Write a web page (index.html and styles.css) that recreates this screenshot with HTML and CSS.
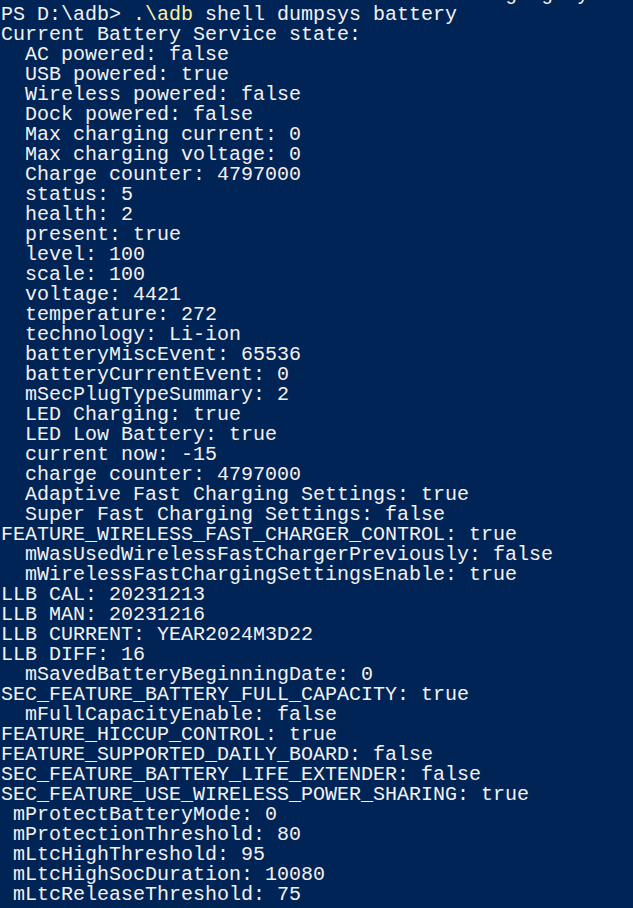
FILE: index.html
```html
<!DOCTYPE html>
<html>
<head>
<meta charset="utf-8">
<link rel="stylesheet" href="styles.css">
</head>
<body>
<pre class="console"><span class="cut">                                      charging by</span>
PS D:\adb&gt; <span class="cmd">.\adb</span> shell dumpsys battery
Current Battery Service state:
  AC powered: false
  USB powered: true
  Wireless powered: false
  Dock powered: false
  Max charging current: 0
  Max charging voltage: 0
  Charge counter: 4797000
  status: 5
  health: 2
  present: true
  level: 100
  scale: 100
  voltage: 4421
  temperature: 272
  technology: Li-ion
  batteryMiscEvent: 65536
  batteryCurrentEvent: 0
  mSecPlugTypeSummary: 2
  LED Charging: true
  LED Low Battery: true
  current now: -15
  charge counter: 4797000
  Adaptive Fast Charging Settings: true
  Super Fast Charging Settings: false
FEATURE_WIRELESS_FAST_CHARGER_CONTROL: true
  mWasUsedWirelessFastChargerPreviously: false
  mWirelessFastChargingSettingsEnable: true
LLB CAL: 20231213
LLB MAN: 20231216
LLB CURRENT: YEAR2024M3D22
LLB DIFF: 16
  mSavedBatteryBeginningDate: 0
SEC_FEATURE_BATTERY_FULL_CAPACITY: true
  mFullCapacityEnable: false
FEATURE_HICCUP_CONTROL: true
FEATURE_SUPPORTED_DAILY_BOARD: false
SEC_FEATURE_BATTERY_LIFE_EXTENDER: false
SEC_FEATURE_USE_WIRELESS_POWER_SHARING: true
 mProtectBatteryMode: 0
 mProtectionThreshold: 80
 mLtcHighThreshold: 95
 mLtcHighSocDuration: 10080
 mLtcReleaseThreshold: 75</pre>
</body>
</html>
```
FILE: styles.css
```css
html, body {
  margin: 0;
  padding: 0;
  background: #012456;
  height: 100%;
  overflow: hidden;
}
.console {
  margin: -15px 0 0 1px;
  font-family: "Liberation Mono", "DejaVu Sans Mono", monospace;
  font-size: 20px;
  line-height: 20px;
  color: #f2f2f2;
  white-space: pre;
}
.cmd {
  color: #f9f1a5;
}
```
